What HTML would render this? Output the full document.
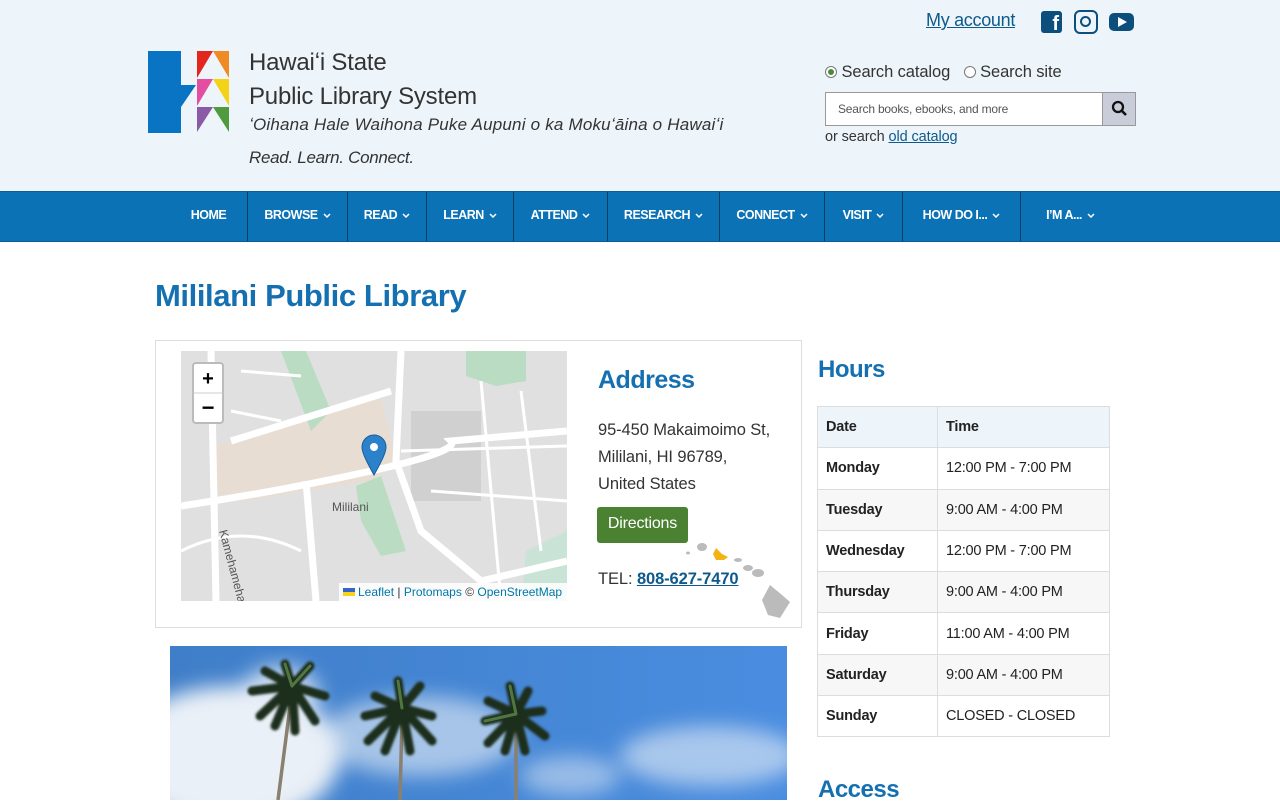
<!DOCTYPE html>
<html><head><meta charset="utf-8"><style>
*{box-sizing:border-box;margin:0;padding:0}
body{width:1280px;height:800px;overflow:hidden;background:#fff;font-family:"Liberation Sans",sans-serif;color:#222;position:relative}
.hdr{position:absolute;left:0;top:0;width:1280px;height:191px;background:#eef5fa}
.abs{position:absolute}
.nav{position:absolute;top:191px;left:0;width:1280px;height:51px;background:#0b72b5;border-top:1px solid #0a5f96;border-bottom:1px solid #0a5f96}
.nav div{position:absolute;top:0;height:49px;line-height:47px;color:#fff;font-weight:bold;font-size:12.5px;text-align:center;border-left:1px solid #083e63;letter-spacing:-.5px}
.nav div:first-child{border-left:none}
.car{display:inline-block;width:8px;height:5px;margin-left:5px;vertical-align:1px}
h1{position:absolute;left:155px;top:278px;font-size:31px;color:#1470b0;font-weight:bold;letter-spacing:-.4px}
table{position:absolute;left:817px;top:406px;border-collapse:collapse;font-size:14.5px;letter-spacing:-.2px}
td{border:1px solid #ddd;height:41.3px;padding:0 8px}
td:first-child{width:120px;font-weight:bold}
td:last-child{width:172px}
tr:nth-child(odd) td{background:#f7f7f7}
tr:first-child td{background:#eef5fa;font-weight:bold}
</style></head><body>
<div class="hdr"></div>
<svg class="abs" style="left:148px;top:51px" width="82" height="82" viewBox="0 0 82 82">
<path d="M0 0h33v34h15L33 56v26H0z" fill="#0a74c4"/>
<path d="M49 0h16L49 27z" fill="#e42620"/><path d="M65 0h16v27z" fill="#f08a24"/>
<path d="M49 28h16L49 55z" fill="#e34ea0"/><path d="M65 28h16v27z" fill="#f4d216"/>
<path d="M49 56h16L49 81z" fill="#8a5aa7"/><path d="M65 56h16v25z" fill="#4f9a3c"/>
</svg>
<div class="abs" style="left:249px;top:46px;font-size:24px;line-height:34px;color:#333;letter-spacing:-.2px">Hawaiʻi State<br>Public Library System</div>
<div class="abs" style="left:249px;top:115px;font-size:17px;font-style:italic;color:#333;letter-spacing:.2px">ʻOihana Hale Waihona Puke Aupuni o ka Mokuʻāina o Hawaiʻi</div>
<div class="abs" style="left:249px;top:148px;font-size:17px;font-style:italic;color:#333;letter-spacing:-.3px">Read. Learn. Connect.</div>
<a class="abs" style="left:926px;top:10px;font-size:18px;color:#0d5a8c;text-decoration:underline;letter-spacing:-.3px">My account</a>
<div class="abs" style="left:1041px;top:11px;width:21px;height:22px;background:#0d4f7c;border-radius:3px;color:#fff;font-weight:bold;font-size:20px;text-align:right;padding-right:3px;line-height:26px">f</div>
<div class="abs" style="left:1074px;top:10px;width:24px;height:24px;border:2.5px solid #0d4f7c;border-radius:6px"><div style="position:absolute;left:4px;top:4px;width:11px;height:11px;border:2.5px solid #0d4f7c;border-radius:50%"></div></div>
<div class="abs" style="left:1109px;top:13px;width:25px;height:18px;background:#0d4f7c;border-radius:5px"><div style="position:absolute;left:9px;top:4px;border-left:9px solid #fff;border-top:5px solid transparent;border-bottom:5px solid transparent"></div></div>
<div class="abs" style="left:825px;top:63px;font-size:16.5px;color:#333;letter-spacing:-.1px">
<span style="display:inline-block;width:12px;height:12px;border-radius:50%;border:1px solid #777;background:#fff;vertical-align:-1px;position:relative"><span style="position:absolute;left:2px;top:2px;width:6px;height:6px;border-radius:50%;background:#4a8a3a"></span></span> Search catalog &nbsp;&nbsp;<span style="display:inline-block;width:12px;height:12px;border-radius:50%;border:1px solid #777;background:#fff;vertical-align:-1px"></span> Search site</div>
<div class="abs" style="left:825px;top:92px;width:311px;height:34px;border:1px solid #999;background:#fff">
<span style="position:absolute;left:12px;top:9px;font-size:12px;color:#555;letter-spacing:-.2px">Search books, ebooks, and more</span>
<div style="position:absolute;right:0;top:0;width:33px;height:32px;background:#c8cdd9;border-left:1px solid #999"><svg width="33" height="32"><circle cx="15" cy="14" r="5" fill="none" stroke="#111" stroke-width="2.3"/><path d="M19 18l4 4" stroke="#111" stroke-width="2.6"/></svg></div></div>
<div class="abs" style="left:825px;top:129px;font-size:14.5px;color:#333;letter-spacing:-.1px">or search <span style="color:#0d5a8c;text-decoration:underline">old catalog</span></div>
<div class="nav">
<div style="left:170px;width:77px">HOME</div>
<div style="left:247px;width:100px">BROWSE<svg class="car" viewBox="0 0 8 5"><path d="M1 1l3 3 3-3" stroke="#fff" stroke-width="1.5" fill="none"/></svg></div>
<div style="left:347px;width:79px">READ<svg class="car" viewBox="0 0 8 5"><path d="M1 1l3 3 3-3" stroke="#fff" stroke-width="1.5" fill="none"/></svg></div>
<div style="left:426px;width:87px">LEARN<svg class="car" viewBox="0 0 8 5"><path d="M1 1l3 3 3-3" stroke="#fff" stroke-width="1.5" fill="none"/></svg></div>
<div style="left:513px;width:94px">ATTEND<svg class="car" viewBox="0 0 8 5"><path d="M1 1l3 3 3-3" stroke="#fff" stroke-width="1.5" fill="none"/></svg></div>
<div style="left:607px;width:112px">RESEARCH<svg class="car" viewBox="0 0 8 5"><path d="M1 1l3 3 3-3" stroke="#fff" stroke-width="1.5" fill="none"/></svg></div>
<div style="left:719px;width:105px">CONNECT<svg class="car" viewBox="0 0 8 5"><path d="M1 1l3 3 3-3" stroke="#fff" stroke-width="1.5" fill="none"/></svg></div>
<div style="left:824px;width:78px">VISIT<svg class="car" viewBox="0 0 8 5"><path d="M1 1l3 3 3-3" stroke="#fff" stroke-width="1.5" fill="none"/></svg></div>
<div style="left:902px;width:118px">HOW DO I...<svg class="car" viewBox="0 0 8 5"><path d="M1 1l3 3 3-3" stroke="#fff" stroke-width="1.5" fill="none"/></svg></div>
<div style="left:1020px;width:100px">I’M A...<svg class="car" viewBox="0 0 8 5"><path d="M1 1l3 3 3-3" stroke="#fff" stroke-width="1.5" fill="none"/></svg></div>
</div>
<h1>Mililani Public Library</h1>
<div class="abs" style="left:155px;top:340px;width:647px;height:288px;border:1px solid #ddd"></div>
<svg class="abs" style="left:181px;top:351px" width="386" height="250" viewBox="0 0 386 250">
<rect width="386" height="250" fill="#e0e0e0"/>
<path d="M30 95 L200 45 L215 110 L190 130 L60 150 L30 140z" fill="#e8ddd3"/>
<path d="M100 0 L125 0 L150 60 L130 80z" fill="#b9dcc2"/>
<path d="M285 0h60v30l-30 5-30-10z" fill="#b9dcc2"/>
<path d="M175 135 L200 125 L225 200 L200 205 L180 170z" fill="#b9dcc2"/>
<path d="M345 200 L386 180 L386 250 L340 250z" fill="#c9e4d6"/>
<rect x="230" y="60" width="70" height="90" fill="#d0d0d0"/>
<g fill="none" stroke="#fff" stroke-width="7"><path d="M0 155 Q100 140 190 120 T270 90 L386 80"/><path d="M220 0 L215 110 L240 180 L300 230 L386 210"/><path d="M30 0 L35 250"/><path d="M125 130 L135 250"/><path d="M50 90 L210 40"/></g>
<g fill="none" stroke="#fff" stroke-width="3"><path d="M220 100 L386 95"/><path d="M250 140 L386 150"/><path d="M0 200 Q60 170 120 200"/><path d="M300 30 L320 250"/><path d="M340 40 L360 200"/><path d="M60 20 L120 25"/><path d="M50 60 L100 70"/></g>
<text x="151" y="160" font-size="12" fill="#555" font-family="Liberation Sans">Mililani</text>
<text x="38" y="180" font-size="12" fill="#555" font-family="Liberation Sans" transform="rotate(75 38 180)">Kamehameha</text>
<rect x="12" y="12" width="30" height="60" rx="3" fill="#fff" stroke="#bbb" stroke-width="2"/><line x1="12" y1="42" x2="42" y2="42" stroke="#ccc"/>
<text x="27" y="34" font-size="20" text-anchor="middle" font-weight="bold" font-family="Liberation Sans">+</text>
<text x="27" y="64" font-size="22" text-anchor="middle" font-weight="bold" font-family="Liberation Sans">−</text>
<path d="M193 124 C183 106 181 100 181 96 a12 12 0 0 1 24 0 c0 4-2 10-12 28z" fill="#2b82cb" stroke="#1b5e99"/><circle cx="193" cy="96" r="4" fill="#fff"/>
<rect x="158" y="232" width="228" height="18" fill="#fff" opacity=".85"/>
<rect x="162" y="237" width="12" height="4" fill="#3465c7"/><rect x="162" y="241" width="12" height="4" fill="#f7d41b"/>
<text x="177" y="245" font-size="12" font-family="Liberation Sans" fill="#0078a8">Leaflet <tspan fill="#333">|</tspan> Protomaps <tspan fill="#333">©</tspan> OpenStreetMap</text>
</svg>
<div class="abs" style="left:598px;top:366px;font-size:25px;font-weight:bold;color:#1470b0;letter-spacing:-.5px">Address</div>
<div class="abs" style="left:598px;top:417px;font-size:16.5px;line-height:27px;color:#333;letter-spacing:-.1px">95-450 Makaimoimo St,<br>Mililani, HI 96789,<br>United States</div>
<svg class="abs" style="left:680px;top:540px" width="115" height="82" viewBox="0 0 115 82"><g fill="#bbb"><ellipse cx="8" cy="13" rx="2" ry="1.5"/><ellipse cx="22" cy="7" rx="5" ry="4"/><ellipse cx="58" cy="20" rx="4" ry="2"/><ellipse cx="68" cy="28" rx="5" ry="3"/><ellipse cx="78" cy="33" rx="6" ry="4"/><path d="M90 45 L102 55 L110 62 L100 78 L88 75 L82 60z"/></g><path d="M36 8 L42 14 L48 17 L44 20 L36 20 L33 14z" fill="#f3b314"/></svg>
<div class="abs" style="left:597px;top:507px;width:91px;height:36px;background:#4a8232;border-radius:3px;color:#fff;font-size:16px;line-height:34px;text-align:center;letter-spacing:-.2px">Directions</div>
<div class="abs" style="left:598px;top:570px;font-size:16.5px;color:#333;letter-spacing:-.1px">TEL: <b style="color:#0d5a8c;text-decoration:underline">808-627-7470</b></div>
<svg class="abs" style="left:170px;top:646px" width="617" height="154" viewBox="0 0 617 154">
<defs><linearGradient id="s" x1="0" y1="0" x2="1" y2="0"><stop offset="0" stop-color="#3f7ec8"/><stop offset="1" stop-color="#4a8de0"/></linearGradient><filter id="b"><feGaussianBlur stdDeviation="10"/></filter><filter id="c"><feGaussianBlur stdDeviation="1.2"/></filter></defs>
<rect width="617" height="154" fill="url(#s)"/>
<g filter="url(#b)" fill="#eaf0f7"><ellipse cx="60" cy="110" rx="110" ry="70"/><ellipse cx="110" cy="50" rx="40" ry="30" opacity=".8"/><ellipse cx="250" cy="90" rx="100" ry="40" opacity=".6"/><ellipse cx="540" cy="110" rx="90" ry="30" opacity=".6"/><ellipse cx="400" cy="130" rx="50" ry="20" opacity=".5"/></g>
<g stroke="#8a8070" stroke-width="3.5" fill="none"><path d="M122 45 L108 154"/><path d="M232 70 L230 154"/><path d="M346 80 L346 154"/></g>
<g fill="none" stroke="#1f2f1c" stroke-width="9" stroke-linecap="round" filter="url(#c)">
<path d="M122 40 L82 45 M122 40 L90 70 M122 40 L105 80 M122 40 L125 85 M122 40 L145 75 M122 40 L155 50 M122 40 L140 20 M122 40 L115 18 M122 40 L95 25"/>
<path d="M232 62 L195 70 M232 62 L198 95 M232 62 L215 105 M232 62 L240 105 M232 62 L262 95 M232 62 L262 70 M232 62 L250 40 M232 62 L228 35 M232 62 L205 50"/>
<path d="M346 68 L315 75 M346 68 L318 97 M346 68 L335 105 M346 68 L355 105 M346 68 L375 90 M346 68 L372 65 M346 68 L358 45 M346 68 L340 40 M346 68 L318 55"/>
</g>
<g fill="none" stroke="#5f8a4a" stroke-width="3" stroke-linecap="round" opacity=".8"><path d="M122 40 L115 18 M122 40 L140 20 M232 62 L228 35 M346 68 L340 40 M346 68 L315 75"/></g>
</svg>
<div class="abs" style="left:818px;top:356px;font-size:24px;font-weight:bold;color:#1470b0;letter-spacing:-.5px">Hours</div>
<table>
<tr><td>Date</td><td>Time</td></tr>
<tr><td>Monday</td><td>12:00 PM - 7:00 PM</td></tr>
<tr><td>Tuesday</td><td>9:00 AM - 4:00 PM</td></tr>
<tr><td>Wednesday</td><td>12:00 PM - 7:00 PM</td></tr>
<tr><td>Thursday</td><td>9:00 AM - 4:00 PM</td></tr>
<tr><td>Friday</td><td>11:00 AM - 4:00 PM</td></tr>
<tr><td>Saturday</td><td>9:00 AM - 4:00 PM</td></tr>
<tr><td>Sunday</td><td>CLOSED - CLOSED</td></tr>
</table>
<div class="abs" style="left:818px;top:776px;font-size:24px;font-weight:bold;color:#1470b0;letter-spacing:-.5px">Access</div>
</body></html>
